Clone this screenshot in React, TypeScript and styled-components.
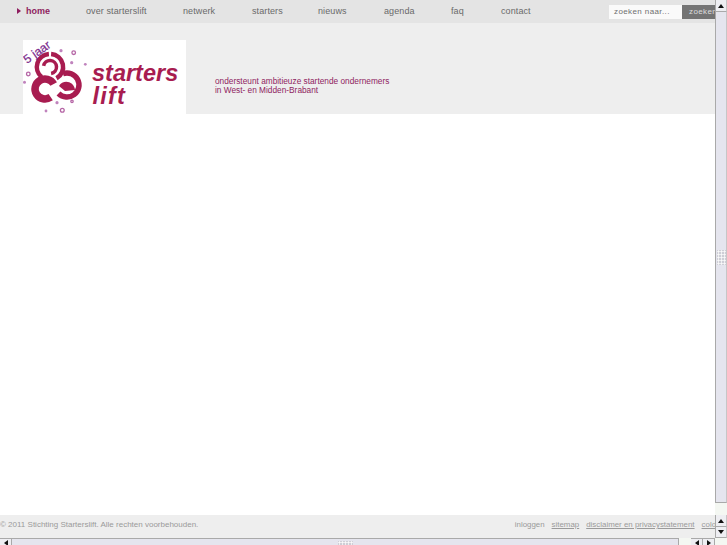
import React from "react";
import styled, { createGlobalStyle } from "styled-components";

const GlobalStyle = createGlobalStyle`
  html, body {
    margin: 0;
    padding: 0;
    width: 727px;
    height: 545px;
    overflow: hidden;
    background: #fff;
    font-family: "Liberation Sans", Arial, sans-serif;
  }
`;

const navItems = [
  { label: "over starterslift", width: 97 },
  { label: "netwerk", width: 69 },
  { label: "starters", width: 66 },
  { label: "nieuws", width: 66 },
  { label: "agenda", width: 67 },
  { label: "faq", width: 50 },
  { label: "contact", width: 60 },
];

const App: React.FC = () => {
  return (
    <Frame>
      <GlobalStyle />
      <Page>
        <TopBar>
          <HomeLink>
            <HomeArrow />
            home
          </HomeLink>
          <Nav>
            {navItems.map((item) => (
              <NavLink key={item.label} $width={item.width}>
                {item.label}
              </NavLink>
            ))}
          </Nav>
          <SearchBox>
            <SearchInput>zoeken naar...</SearchInput>
            <SearchButton>zoeken</SearchButton>
          </SearchBox>
        </TopBar>
        <Header>
          <LogoCard>
            <Logo />
          </LogoCard>
          <Tagline>
            ondersteunt ambitieuze startende ondernemers
            <br />
            in West- en Midden-Brabant
          </Tagline>
        </Header>
        <Main />
        <Footer>
          <Copyright>© 2011 Stichting Starterslift. Alle rechten voorbehouden.</Copyright>
          <FooterLinks>
            <FooterLink>inloggen</FooterLink>
            <FooterLink $underline>sitemap</FooterLink>
            <FooterLink $underline>disclaimer en privacystatement</FooterLink>
            <FooterLink $underline>colofon</FooterLink>
          </FooterLinks>
        </Footer>
      </Page>
      <VerticalBar>
        <VArrow $dir="up" />
        <VThumb>
          <Grip $cols={3} $rows={5} />
        </VThumb>
        <VTrough />
        <VArrow $dir="up" />
        <VArrow $dir="down" />
      </VerticalBar>
      <HorizontalBar>
        <HArrow $dir="left" />
        <HThumb>
          <Grip $cols={5} $rows={2} />
        </HThumb>
        <HTrough />
        <HArrow $dir="left" />
        <HArrow $dir="right" />
      </HorizontalBar>
      <Corner />
    </Frame>
  );
};
export default App;

// arc path from angle a0 to a1, degrees clockwise from 12 o'clock
const arc = (cx: number, cy: number, r: number, a0: number, a1: number) => {
  const pt = (a: number) => {
    const rad = (a * Math.PI) / 180;
    return `${(cx + r * Math.sin(rad)).toFixed(1)} ${(cy - r * Math.cos(rad)).toFixed(1)}`;
  };
  const large = Math.abs(a1 - a0) > 180 ? 1 : 0;
  const sweep = a1 > a0 ? 1 : 0;
  return `M${pt(a0)} A${r} ${r} 0 ${large} ${sweep} ${pt(a1)}`;
};

const Logo: React.FC = () => (
  <svg width="163" height="74" viewBox="0 0 163 74">
    <g fill="none" stroke="#a81c50">
      {/* top swirl */}
      <path d={arc(27, 27, 13, 5, 150)} strokeWidth="4.5" />
      <path d={arc(27, 27, 13, -5, -140)} strokeWidth="4.5" />
      <path d={arc(27, 27, 6.5, -80, 170)} strokeWidth="3.5" />
      {/* right swirl */}
      <path d={arc(44, 45, 12, -20, 225)} strokeWidth="5.5" />
      {/* left swirl */}
      <path d={arc(22, 49, 10, 60, -215)} strokeWidth="7.5" />
    </g>
    <path d="M36 46 C40 39 51 41 52 50 L42 51 Z" fill="#a81c50" />
    <g fill="none" stroke="#b565a5" strokeWidth="1.3">
      <circle cx="5.3" cy="34" r="1.8" />
      <circle cx="50.7" cy="12.7" r="1.8" />
      <circle cx="49" cy="61.3" r="1.2" />
      <circle cx="39.3" cy="70.3" r="1.9" />
    </g>
    <g fill="#c083bd">
      <circle cx="1.5" cy="42.3" r="1.5" />
      <circle cx="38" cy="10.7" r="1.6" />
      <circle cx="48.7" cy="22.7" r="1.6" />
      <circle cx="62.3" cy="24.3" r="1.4" />
      <circle cx="34" cy="62.7" r="1.6" />
      <circle cx="23" cy="71" r="1.4" />
    </g>
    <LogoSmallText x="4" y="24" transform="rotate(-35 4 24)">
      5 jaar
    </LogoSmallText>
    <LogoText x="69" y="41">
      starters
    </LogoText>
    <LogoText x="69.5" y="63.5" $spaced>
      lift
    </LogoText>
  </svg>
);

const LogoSmallText = styled.text`
  font-family: "Liberation Sans", Arial, sans-serif;
  font-size: 12px;
  fill: #7b2a8c;
  stroke: #7b2a8c;
  stroke-width: 0.2px;
`;

const LogoText = styled.text<{ $spaced?: boolean }>`
  font-family: "Liberation Sans", Arial, sans-serif;
  font-size: 23.5px;
  font-weight: 700;
  font-style: italic;
  letter-spacing: ${(p) => (p.$spaced ? "1.2px" : "0")};
  fill: #a81c50;
`;

const Frame = styled.div`
  width: 727px;
  height: 545px;
  display: grid;
  grid-template-columns: 715px 12px;
  grid-template-rows: 538px 7px;
  overflow: hidden;
`;

const Page = styled.div`
  display: flex;
  flex-direction: column;
  min-width: 0;
  overflow: hidden;
  background: #fff;
`;

const TopBar = styled.div`
  height: 23px;
  flex: none;
  display: flex;
  align-items: center;
  box-sizing: border-box;
  background: #e4e4e4;
  padding: 0 0 2px 17px;
  white-space: nowrap;
`;

const HomeLink = styled.span`
  display: flex;
  align-items: center;
  width: 69px;
  flex: none;
  font-size: 9px;
  font-weight: 700;
  color: #8f1d5f;
`;

const HomeArrow = styled.i`
  width: 0;
  height: 0;
  margin-right: 5px;
  border-left: 4px solid #8f1d5f;
  border-top: 3px solid transparent;
  border-bottom: 3px solid transparent;
`;

const Nav = styled.nav`
  display: flex;
  flex: none;
`;

const NavLink = styled.span<{ $width: number }>`
  width: ${(p) => p.$width}px;
  font-size: 9px;
  letter-spacing: 0.1px;
  color: #6a6a6a;
`;

const SearchBox = styled.div`
  display: flex;
  flex: none;
  margin-left: auto;
  margin-top: 3px;
  height: 14px;
`;

const SearchInput = styled.div`
  width: 68px;
  padding-left: 5px;
  background: #fafafa;
  font-size: 8px;
  line-height: 14px;
  letter-spacing: 0.4px;
  color: #6f6f6f;
  white-space: nowrap;
`;

const SearchButton = styled.div`
  width: 26px;
  padding-left: 7px;
  background: #747474;
  font-size: 8px;
  line-height: 14px;
  letter-spacing: 0.4px;
  color: #dedede;
  overflow: hidden;
`;

const Header = styled.header`
  height: 91px;
  flex: none;
  display: flex;
  background: #eeeeee;
  padding: 17px 0 0 23px;
  box-sizing: border-box;
  overflow: hidden;
`;

const LogoCard = styled.div`
  width: 163px;
  height: 74px;
  flex: none;
  background: #fff;
`;

const Tagline = styled.p`
  margin: 37px 0 0 29px;
  font-size: 8.3px;
  line-height: 9px;
  color: #8f1d5f;
  white-space: nowrap;
`;

const Main = styled.main`
  flex: 1;
  background: #fff;
`;

const Footer = styled.footer`
  height: 23px;
  flex: none;
  display: flex;
  align-items: center;
  justify-content: space-between;
  box-sizing: border-box;
  padding-bottom: 4px;
  background: #eeeeee;
  font-size: 8px;
  color: #9a9a9a;
  white-space: nowrap;
  overflow: hidden;
`;

const Copyright = styled.span`
  flex: none;
`;

const FooterLinks = styled.div`
  display: flex;
  flex: none;
  gap: 7px;
  margin-right: -12px;
  font-size: 7.9px;
`;

const FooterLink = styled.span<{ $underline?: boolean }>`
  text-decoration: ${(p) => (p.$underline ? "underline" : "none")};
`;

const VerticalBar = styled.div`
  grid-row: 1;
  grid-column: 2;
  display: flex;
  flex-direction: column;
  background: #f4f7f2;
`;

const VThumb = styled.div`
  height: 491px;
  flex: none;
  display: flex;
  align-items: center;
  justify-content: center;
  box-sizing: border-box;
  background: #e5e5ee;
  border-left: 1px solid #a9a9a9;
  border-right: 1px solid #c6c6c6;
  border-bottom: 1px solid #a9a9a9;
`;

const VTrough = styled.div`
  flex: 1;
`;

const Grip = styled.div<{ $cols: number; $rows: number }>`
  width: ${(p) => p.$cols * 3}px;
  height: ${(p) => p.$rows * 3}px;
  background-image: radial-gradient(#fafafa 40%, #c9c9d2 70%);
  background-size: 3px 3px;
`;

const VArrow = styled.div<{ $dir: "up" | "down" }>`
  height: ${(p) => (p.$dir === "up" ? 12 : 11)}px;
  flex: none;
  display: flex;
  align-items: center;
  justify-content: center;
  box-sizing: border-box;
  background: #eeeef2;
  border-left: 1px solid #a9a9a9;
  border-right: 1px solid #c6c6c6;
  border-bottom: 1px solid #a9a9a9;
  &::after {
    content: "";
    border-left: 3px solid transparent;
    border-right: 3px solid transparent;
    border-bottom: ${(p) => (p.$dir === "up" ? "4px solid #111" : "none")};
    border-top: ${(p) => (p.$dir === "down" ? "4px solid #111" : "none")};
  }
`;

const HorizontalBar = styled.div`
  grid-row: 2;
  grid-column: 1;
  display: flex;
  background: #f4f7f2;
`;

const HThumb = styled.div`
  width: 667px;
  flex: none;
  display: flex;
  justify-content: center;
  align-items: flex-start;
  padding-top: 2px;
  box-sizing: border-box;
  background: #e5e5ee;
  border-top: 1px solid #a9a9a9;
  border-right: 1px solid #a9a9a9;
  overflow: hidden;
`;

const HTrough = styled.div`
  flex: 1;
`;

const HArrow = styled.div<{ $dir: "left" | "right" }>`
  width: 12px;
  flex: none;
  display: flex;
  justify-content: center;
  padding-top: 1px;
  background: #eeeef2;
  border-top: 1px solid #a9a9a9;
  border-right: 1px solid #a9a9a9;
  box-sizing: border-box;
  &::after {
    content: "";
    height: 0;
    border-top: 3px solid transparent;
    border-bottom: 3px solid transparent;
    border-right: ${(p) => (p.$dir === "left" ? "4px solid #111" : "none")};
    border-left: ${(p) => (p.$dir === "right" ? "4px solid #111" : "none")};
  }
`;

const Corner = styled.div`
  grid-row: 2;
  grid-column: 2;
  background: #f4f7f2;
`;
